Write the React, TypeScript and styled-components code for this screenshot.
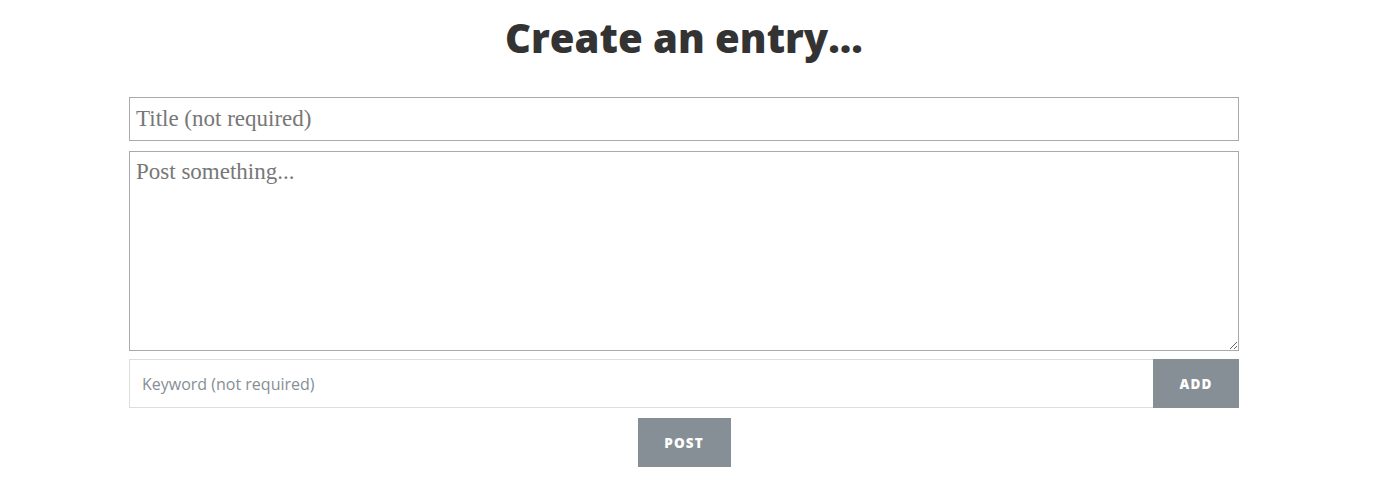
import React from "react";
import styled, { createGlobalStyle } from "styled-components";

const Global = createGlobalStyle`
  html, body { margin: 0; padding: 0; background: #fff; }
  * { box-sizing: border-box; }
`;

const Page = styled.div`
  display: flex;
  flex-direction: column;
  align-items: center;
  padding-top: 12px;
  padding-right: 8px;
`;

const Heading = styled.h1`
  margin: 0;
  font-family: "Open Sans", sans-serif;
  font-weight: 800;
  font-size: 40px;
  line-height: 52px;
  color: #333;
`;

const Form = styled.form`
  width: 1110px;
  margin-top: 33px;
  display: flex;
  flex-direction: column;
`;

const TitleInput = styled.input`
  height: 44px;
  width: 100%;
  border: 1px solid #aaa;
  padding: 0 6px;
  font-family: "Liberation Serif", serif;
  font-size: 23px;
  color: #333;
  outline: none;
  &::placeholder { color: #777; }
`;

const Body = styled.textarea`
  margin-top: 10px;
  height: 200px;
  width: 100%;
  border: 1px solid #aaa;
  padding: 7px 6px;
  font-family: "Liberation Serif", serif;
  font-size: 23px;
  color: #333;
  resize: vertical;
  outline: none;
  &::placeholder { color: #777; }
`;

const KeywordRow = styled.div`
  margin-top: 8px;
  display: flex;
  height: 49px;
`;

const KeywordInput = styled.input`
  flex: 1;
  height: 100%;
  border: 1px solid #ddd;
  border-right: none;
  padding: 0 12px;
  font-family: "Open Sans", sans-serif;
  font-size: 16px;
  color: #333;
  outline: none;
  &::placeholder { color: #868e96; }
`;

const Button = styled.button<{ $w: number }>`
  width: ${p => p.$w}px;
  height: 49px;
  border: none;
  background: #868e96;
  color: #fff;
  font-family: "Open Sans", sans-serif;
  font-weight: 800;
  font-size: 13.5px;
  letter-spacing: 1.1px;
  text-transform: uppercase;
  cursor: pointer;
`;

const PostRow = styled.div`
  display: flex;
  justify-content: center;
  margin-top: 10px;
`;

export default function App() {
  return (
    <Page>
      <Global />
      <Heading>Create an entry...</Heading>
      <Form onSubmit={e => e.preventDefault()}>
        <TitleInput placeholder="Title (not required)" />
        <Body placeholder="Post something..." />
        <KeywordRow>
          <KeywordInput placeholder="Keyword (not required)" />
          <Button type="button" $w={86}>Add</Button>
        </KeywordRow>
        <PostRow>
          <Button type="submit" $w={93}>Post</Button>
        </PostRow>
      </Form>
    </Page>
  );
}
